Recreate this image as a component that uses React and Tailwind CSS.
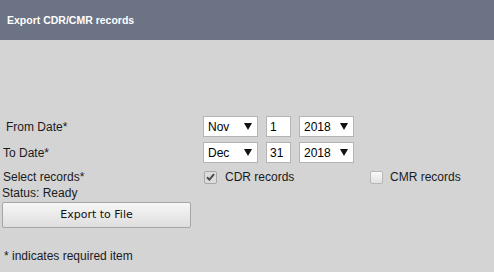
import React from "react";

const Select = ({ value, width }) => (
    <div className={`flex h-[21px] items-center justify-between border border-[#b4b4b4] bg-white pl-[4px] pr-[5px] text-[12px] text-black ${width}`}>
        <span>{value}</span>
        <svg width="8" height="7" viewBox="0 0 8 7"><path d="M0 0 H8 L4 7 Z" fill="#111" /></svg>
    </div>
);

const Check = ({ checked }) => (
    <div className={`flex h-[13px] w-[13px] items-center justify-center rounded-[2px] border ${checked ? "border-[#a8a8a8] bg-[#dcdcdc]" : "border-[#b8b8b8] bg-gradient-to-b from-[#fafafa] to-[#e2e2e2]"}`}>
        {checked && (
            <svg width="9" height="8" viewBox="0 0 9 8"><path d="M1 4.2 L3.4 6.6 L8 1.2" stroke="#4a4a4a" strokeWidth="2" fill="none" /></svg>
        )}
    </div>
);

const App = () => {
    return (
        <div className="h-[272px] w-[494px] bg-[#d4d4d4] font-['Liberation_Sans',Arial,sans-serif] text-[12px] leading-[14px] text-[#1a1a22]">
            <div className="flex h-[40px] items-center bg-[#6b7385] pl-[7px] text-[10.5px] font-bold text-white">
                Export CDR/CMR records
            </div>

            <div className="mt-[76px] flex h-[21px] items-center">
                <div className="w-[203px] pl-[6px]">From Date*</div>
                <Select value="Nov" width="w-[55px]" />
                <div className="ml-[8px] flex h-[21px] w-[25px] items-center border border-[#b4b4b4] bg-white pl-[3px] text-black">1</div>
                <div className="ml-[8px]"><Select value="2018" width="w-[55px]" /></div>
            </div>

            <div className="mt-[5px] flex h-[21px] items-center">
                <div className="w-[203px] pl-[3px]">To Date*</div>
                <Select value="Dec" width="w-[55px]" />
                <div className="ml-[8px] flex h-[21px] w-[25px] items-center border border-[#b4b4b4] bg-white pl-[3px] text-black">31</div>
                <div className="ml-[8px]"><Select value="2018" width="w-[55px]" /></div>
            </div>

            <div className="mt-[7px] flex h-[14px] items-center">
                <div className="w-[204px] pl-[3px]">Select records*</div>
                <Check checked />
                <span className="ml-[8px] w-[145px]">CDR records</span>
                <Check />
                <span className="ml-[7px]">CMR records</span>
            </div>

            <div className="mt-[2px] pl-[2px]">Status: Ready</div>

            <button className="ml-[2px] mt-[2px] flex h-[26px] w-[189px] items-center justify-center rounded-[2px] border border-[#a6a6a6] bg-gradient-to-b from-[#f7f7f7] to-[#dedede] font-['DejaVu_Sans',sans-serif] text-[11px] text-[#111]">
                Export to File
            </button>

            <div className="mt-[21px] pl-[4px]">* indicates required item</div>
        </div>
    );
};

export default App;
